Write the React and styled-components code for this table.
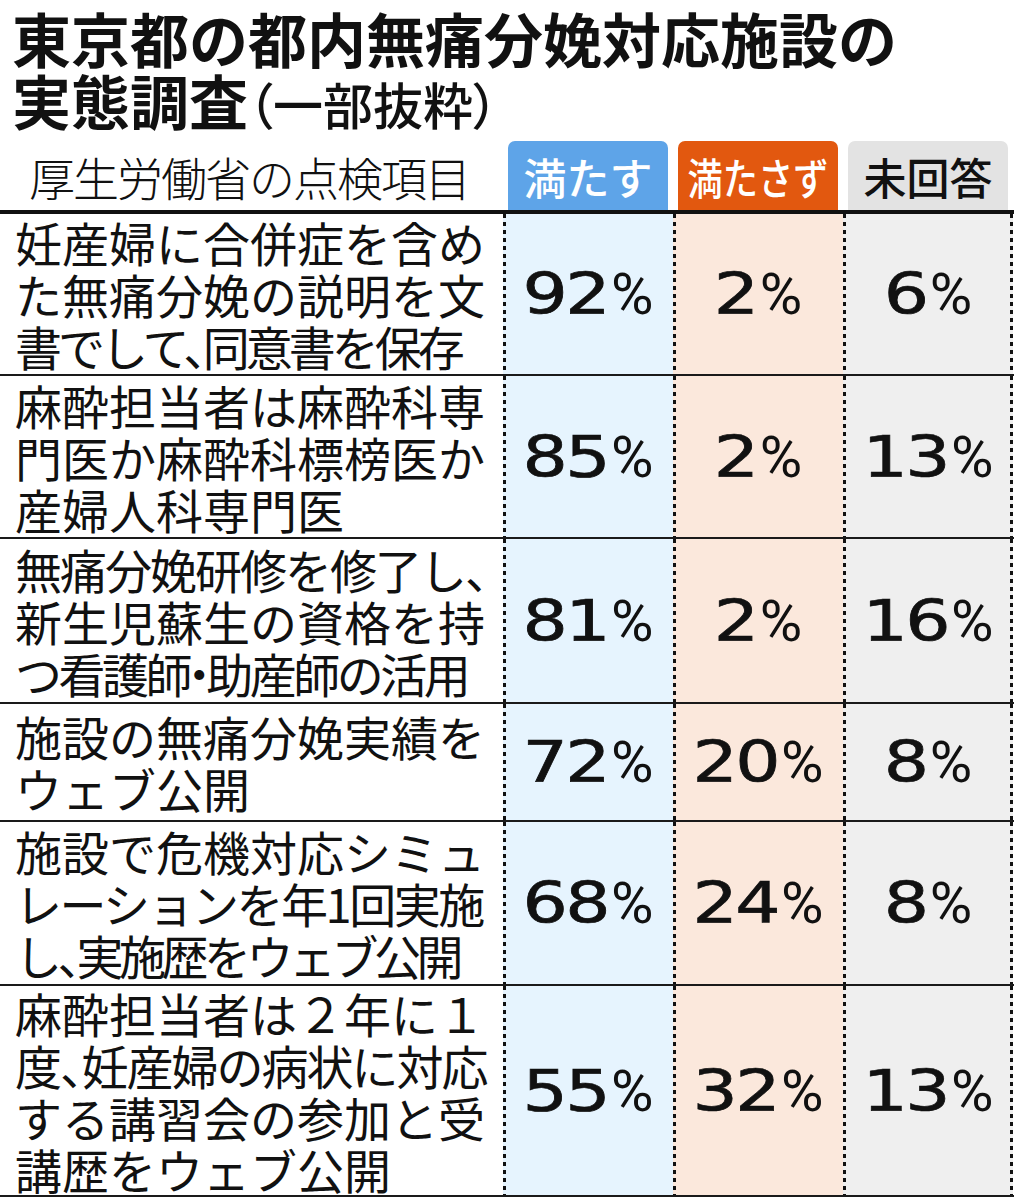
import React from "react";
import styled, { createGlobalStyle } from "styled-components";

const Global = createGlobalStyle`
  html, body { margin: 0; padding: 0; background: #fff; }
  body {
    font-family: "Noto Sans CJK JP", "Noto Sans", sans-serif;
    color: #111;
  }
`;

const Page = styled.div`
  width: 1017px;
  padding-top: 7px;
`;

const Title = styled.h1`
  margin: 0;
  padding-left: 12px;
  font-size: 59px;
  font-weight: 700;
  line-height: 62px;
  white-space: nowrap;
`;

const Sub = styled.span`
  font-size: 50px;
  font-weight: 500;
  font-feature-settings: "palt";
`;

const Grid = styled.div`
  display: grid;
  grid-template-columns: 503px repeat(3, 170px);
`;

const HeaderRow = styled(Grid)`
  height: 69px;
  margin-top: 7px;
`;

const HeaderLabel = styled.div`
  display: flex;
  align-items: center;
  padding-left: 29px;
  font-size: 46px;
  font-weight: 300;
  letter-spacing: -2px;
  white-space: nowrap;
`;

const Badge = styled.div`
  margin: 0 5px;
  border-radius: 7px 7px 0 0;
  background: ${(p) => p.$bg};
  color: ${(p) => p.$fg};
  display: flex;
  align-items: center;
  justify-content: center;
  font-size: 43px;
  font-weight: 500;
  white-space: nowrap;
`;

const BadgeText = styled.span`
  display: inline-block;
  transform: scaleX(${(p) => p.$sx || 1});
`;

const Table = styled.div`
  width: 1014px;
  border-top: 4px solid #111;
`;

const Row = styled(Grid)`
  height: ${(p) => p.$h}px;
  border-bottom: 2px solid #1a1a1a;
`;

const Label = styled.div`
  display: flex;
  flex-direction: column;
  justify-content: center;
  padding-left: 15px;
  font-size: 47px;
  font-weight: 400;
  line-height: 52px;
  white-space: nowrap;
`;

const Line = styled.span`
  letter-spacing: ${(p) => p.$ls || 0}px;
`;

const Punct = styled.span`
  margin: ${(p) => (p.$dot ? "0 -0.28em" : "0 -0.5em 0 0")};
`;

const dots = "linear-gradient(#111 0 55%, transparent 55%)";

const Cell = styled.div`
  display: flex;
  align-items: center;
  justify-content: center;
  background: ${dots} left top / 3px 8px repeat-y,
    ${(p) => (p.$last ? `${dots} right top / 3px 8px repeat-y,` : "")}
    ${(p) => p.$bg};
  white-space: nowrap;
`;

const Digits = styled.span`
  display: inline-block;
  font-family: "DejaVu Sans", sans-serif;
  font-size: 57px;
  letter-spacing: -2px;
  -webkit-text-stroke: 0.7px #111;
  transform: scaleX(1.25);
  margin: 0 ${(p) => p.$n * 0.075}em;
`;

const Pct = styled.span`
  font-family: Roboto, "Liberation Sans", sans-serif;
  font-weight: 400;
  font-size: 58px;
  margin-left: 3px;
`;

const COLS = [
  { head: "満たす", badge: "#5ea4e8", fg: "#fff", cell: "#e6f4fe" },
  { head: "満たさず", badge: "#e2580f", fg: "#fff", cell: "#fbe8dc", sx: 0.82 },
  { head: "未回答", badge: "#e3e3e3", fg: "#111", cell: "#efefef" },
];

const ROWS = [
  {
    h: 160,
    lines: ["妊産婦に合併症を含め", "た無痛分娩の説明を文", "書でして、同意書を保存"],
    ls: [0, 0, -4],
    v: ["92", "2", "6"],
  },
  {
    h: 161,
    lines: ["麻酔担当者は麻酔科専", "門医か麻酔科標榜医か", "産婦人科専門医"],
    v: ["85", "2", "13"],
  },
  {
    h: 163,
    lines: ["無痛分娩研修を修了し、", "新生児蘇生の資格を持", "つ看護師・助産師の活用"],
    ls: [-2, 0, -3.5],
    v: ["81", "2", "16"],
  },
  {
    h: 116,
    lines: ["施設の無痛分娩実績を", "ウェブ公開"],
    v: ["72", "20", "8"],
  },
  {
    h: 162,
    lines: ["施設で危機対応シミュ", "レーションを年1回実施", "し、実施歴をウェブ公開"],
    ls: [0, -2.5, -4.5],
    v: ["68", "24", "8"],
  },
  {
    h: 209,
    lines: ["麻酔担当者は２年に１", "度、妊産婦の病状に対応", "する講習会の参加と受", "講歴をウェブ公開"],
    ls: [0, -2, 0, 0],
    v: ["55", "32", "13"],
  },
];

function renderLine(text) {
  return text.split(/([、・])/).map((part, i) =>
    part === "、" || part === "・" ? (
      <Punct key={i} $dot={part === "・"}>
        {part}
      </Punct>
    ) : (
      part
    )
  );
}

export default function App() {
  return (
    <Page>
      <Global />
      <Title>
        東京都の都内無痛分娩対応施設の
        <br />
        実態調査<Sub>（一部抜粋）</Sub>
      </Title>
      <HeaderRow>
        <HeaderLabel>厚生労働省の点検項目</HeaderLabel>
        {COLS.map((c) => (
          <Badge key={c.head} $bg={c.badge} $fg={c.fg}>
            <BadgeText $sx={c.sx}>{c.head}</BadgeText>
          </Badge>
        ))}
      </HeaderRow>
      <Table>
        {ROWS.map((r, i) => (
          <Row key={i} $h={r.h}>
            <Label>
              {r.lines.map((l, j) => (
                <Line key={j} $ls={r.ls && r.ls[j]}>
                  {renderLine(l)}
                </Line>
              ))}
            </Label>
            {r.v.map((val, k) => (
              <Cell key={k} $bg={COLS[k].cell} $last={k === 2}>
                <Digits $n={val.length}>{val}</Digits>
                <Pct>%</Pct>
              </Cell>
            ))}
          </Row>
        ))}
      </Table>
    </Page>
  );
}
